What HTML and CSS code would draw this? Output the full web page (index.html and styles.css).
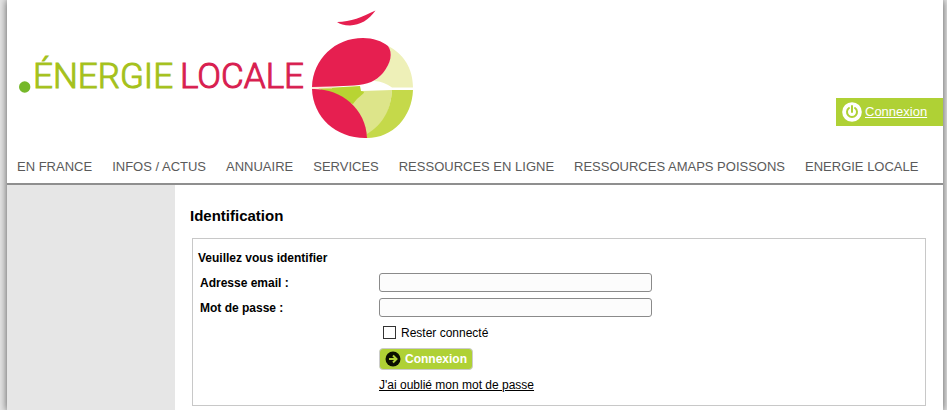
FILE: index.html
```html
<!DOCTYPE html>
<html lang="fr">
<head>
<meta charset="utf-8">
<title>Énergie Locale - Identification</title>
<link rel="stylesheet" href="styles.css">
</head>
<body>
<div class="page">
  <header class="header">
    <svg class="logo" width="410" height="142" viewBox="7 0 410 142" role="img" aria-label="Énergie Locale">
      <circle cx="24.700" cy="87" r="5.700" fill="#76b82a"/>
      <text class="logo-text logo-green" x="33" y="88">ÉNERGIE</text>
      <text class="logo-text logo-red" x="180" y="88">LOCALE</text>
      <path d="M337 22C351 22 362 17 375.500 10.500C369 20 360 25 350 25.500C344 25.500 340 24 337 22Z" fill="#e61f50"/>
      <path d="M388 46C404 54 413 69 413 87.500L392 87.500C387 84 381 81 374 81C386 73 395 57 388 46Z" fill="#eef0b8"/>
      <path d="M361 91L392 90C391 108 384 126 367 138L350 120L345 98Z" fill="#dde58a"/>
      <path d="M318 88.500L360 86L361 91C369 92 359 95 353 104L340 98Z" fill="#b8d432"/>
      <path d="M312 87C313 59 335 38 363 38C373 38 382 41 388 46C393 53 391 63 383 73C376 81 368 84.500 354 85.500C340 86.500 326 86.500 312 87Z" fill="#e61f50"/>
      <path d="M392 90H413C412 117 393 138 367 138V134C384 124 391 108 392 90Z" fill="#c5d94a"/>
      <path d="M312 89C340 88 366 108 367 138C337 139 313 118 312 89Z" fill="#e61f50"/>
      <path d="M312 88H332" stroke="#fbd5b5"/>
    </svg>
    <a class="login-link" href="#connexion">
      <svg width="20" height="20" viewBox="0 0 20 20" aria-hidden="true">
        <circle cx="10" cy="10" r="9.800" fill="#fff"/>
        <path d="M7 6A5 5 0 1 0 13 6M10 4V10" fill="none" stroke="#afd135" stroke-width="2" stroke-linecap="round"/>
      </svg>
      <span>Connexion</span>
    </a>
  </header>
  <nav class="nav">
    <a href="#">EN FRANCE</a>
    <a href="#">INFOS / ACTUS</a>
    <a href="#">ANNUAIRE</a>
    <a href="#">SERVICES</a>
    <a href="#">RESSOURCES EN LIGNE</a>
    <a href="#">RESSOURCES AMAPS POISSONS</a>
    <a href="#">ENERGIE LOCALE</a>
  </nav>
  <div class="body">
    <aside class="sidebar"></aside>
    <main class="main">
      <h1>Identification</h1>
      <form class="panel" id="connexion">
        <h2>Veuillez vous identifier</h2>
        <div class="fields">
          <label for="email">Adresse email :</label>
          <input class="field" id="email" type="email">
          <label for="password">Mot de passe :</label>
          <input class="field" id="password" type="password">
          <div class="remember">
            <input id="remember" type="checkbox">
            <label for="remember">Rester connecté</label>
          </div>
          <button class="submit" type="submit">
            <svg width="16" height="16" viewBox="0 0 16 16" aria-hidden="true">
              <circle cx="8" cy="8" r="7.500" fill="#0b0f00"/>
              <path d="M4 8H11M8 4.500L11.500 8L8 11.500" fill="none" stroke="#afd135" stroke-width="2"/>
            </svg>
            <span>Connexion</span>
          </button>
          <a class="forgot" href="#">J'ai oublié mon mot de passe</a>
        </div>
      </form>
    </main>
  </div>
</div>
</body>
</html>
```
FILE: styles.css
```css
* {
  box-sizing: border-box;
}

body {
  margin: 0;
  padding: 0 4px 0 7px;
  background: #e6e6e6;
  color: #000;
  font: 12px/16px "Liberation Sans", Arial, sans-serif;
}

.page {
  display: flex;
  flex-direction: column;
  min-height: 100vh;
  background: #fff;
  box-shadow: 0 0 8px #555;
}

.header {
  display: flex;
  justify-content: space-between;
  align-items: flex-end;
  padding-bottom: 8px;
}

.logo {
  display: block;
}

.logo-text {
  font-family: Roboto, sans-serif;
  font-size: 35px;
  font-weight: 300;
}

.logo-green {
  fill: #a5c11c;
  stroke: #a5c11c;
}

.logo-red {
  fill: #d81e50;
  stroke: #d81e50;
}

.login-link {
  display: flex;
  align-items: center;
  gap: 3px;
  width: 107px;
  height: 28px;
  margin-bottom: 16px;
  padding-left: 6px;
  background: #afd135;
  color: #fff;
  font-size: 13px;
}

.nav {
  display: flex;
  gap: 20px;
  height: 35px;
  padding: 9px 10px 0;
  border-bottom: 2px solid #8f8f8f;
  white-space: nowrap;
}

.nav a {
  color: #5a5a5a;
  font-size: 13px;
  text-decoration: none;
}

.body {
  display: flex;
  flex: 1;
}

.sidebar {
  width: 168px;
  background: #e6e6e6;
}

.main {
  flex: 1;
  padding: 21px 17px 5px 15px;
}

h1 {
  margin: 0 0 12px;
  font-size: 15px;
  line-height: 20px;
}

.panel {
  margin-left: 2px;
  padding: 11px 5px;
  border: 1px solid #c8c8c8;
}

h2 {
  margin: 0 0 7px;
  font-size: 12px;
  line-height: 16px;
}

.fields {
  display: grid;
  grid-template-columns: 177px 1fr;
  gap: 6px 2px;
  align-items: center;
  padding-left: 2px;
}

.fields > label {
  font-weight: bold;
}

.field {
  width: 273px;
  height: 19px;
  padding: 1px 4px;
  border: 1px solid #8a8a8a;
  border-radius: 3px;
  background: #fcfcfc;
}

.remember,
.submit,
.forgot {
  grid-column: 2;
  justify-self: start;
}

.remember {
  display: flex;
  align-items: center;
  gap: 5px;
  height: 19px;
  padding-left: 4px;
}

.remember input {
  appearance: none;
  width: 13px;
  height: 13px;
  margin: 0;
  border: 1px solid #333;
  background: #fff;
}

.remember input:checked {
  background: #afd135;
}

.submit {
  display: flex;
  align-items: center;
  gap: 4px;
  height: 22px;
  padding: 0 5px;
  border: 1px solid #ccc;
  border-radius: 4px;
  background: #afd135;
  color: #fff;
  font: bold 12px/16px "Liberation Sans", Arial, sans-serif;
}

.forgot {
  color: #000;
  line-height: 18px;
}
```
